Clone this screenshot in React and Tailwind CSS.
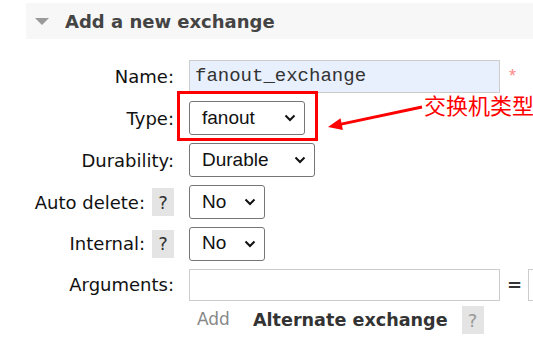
import React from "react";

const Chevron = () => (
  <svg width="12" height="8" viewBox="0 0 12 8">
    <path d="M1.5 1.5 L6 6 L10.5 1.5" fill="none" stroke="#111" strokeWidth="2" />
  </svg>
);

function Select({ value, width }) {
  return (
    <div
      className={`flex h-[34px] items-center justify-between rounded-[3px] border border-[#767676] bg-white pl-[12px] pr-[8px] font-['Liberation_Sans',Arial,sans-serif] text-[19px] text-[#111] ${width}`}
    >
      <span>{value}</span>
      <Chevron />
    </div>
  );
}

function Help({ dim }) {
  return (
    <span
      className={`flex h-[28px] w-[22px] items-center justify-center bg-[#e4e4e4] text-[18px] ${
        dim ? "text-[#999]" : "text-[#333]"
      }`}
    >
      ?
    </span>
  );
}

function Row({ label, help, height, children }) {
  return (
    <div className={`flex items-center ${height}`}>
      <div className="flex w-[174px] shrink-0 items-center justify-end gap-[7px] text-[18px] text-[#111]">
        <span>{label}</span>
        {help && <Help />}
      </div>
      <div className="ml-[15px] flex shrink-0 items-center">{children}</div>
    </div>
  );
}

export default function App() {
  return (
    <div className="relative h-[338px] w-[533px] overflow-hidden bg-white font-['DejaVu_Sans',Verdana,sans-serif]">
      {/* section header */}
      <div className="ml-[26px] mt-[3px] flex h-[36px] items-center bg-[#f7f7f7]">
        <svg className="ml-[9px]" width="14" height="7" viewBox="0 0 14 7">
          <polygon points="0,0 14,0 7,7" fill="#9a9a9a" />
        </svg>
        <span className="ml-[16px] text-[18px] font-bold text-[#444]">Add a new exchange</span>
      </div>

      <div className="mt-[16px] flex flex-col">
        <Row label="Name:" height="h-[42px]">
          <div className="flex h-[33px] w-[311px] items-center border border-[#ccc] bg-[#e8f0fe] pl-[5px] font-['Liberation_Mono','Courier_New',monospace] text-[19px] text-[#333]">
            fanout_exchange
          </div>
          <span className="ml-[9px] font-['Liberation_Sans',Arial,sans-serif] text-[18px] text-[#f88]">*</span>
        </Row>
        <Row label="Type:" height="h-[42px]">
          <Select value="fanout" width="w-[116px]" />
        </Row>
        <Row label="Durability:" height="h-[42px]">
          <Select value="Durable" width="w-[126px]" />
        </Row>
        <Row label="Auto delete:" help height="h-[42px]">
          <Select value="No" width="w-[76px]" />
        </Row>
        <Row label="Internal:" help height="h-[41px]">
          <Select value="No" width="w-[76px]" />
        </Row>
        <Row label="Arguments:" height="h-[41px]">
          <div className="h-[32px] w-[311px] border border-[#ccc] bg-white" />
          <span className="ml-[7px] text-[18px] font-bold text-[#333]">=</span>
          <div className="ml-[6px] h-[32px] w-[120px] shrink-0 border border-[#ccc] bg-white" />
        </Row>
        <div className="ml-[197px] flex h-[30px] items-center">
          <span className="text-[17px] text-[#888]">Add</span>
          <span className="ml-[23px] text-[17.6px] font-bold text-[#333]">Alternate exchange</span>
          <span className="ml-[14px]">
            <Help dim />
          </span>
        </div>
      </div>

      {/* annotation */}
      <div className="pointer-events-none absolute left-[177px] top-[91px] h-[50px] w-[141px] border-[3px] border-[#f00]" />
      <svg className="pointer-events-none absolute left-[320px] top-[95px]" width="110" height="40" viewBox="0 0 110 40">
        <line x1="102" y1="12" x2="20" y2="29.4" stroke="#f00" strokeWidth="3" />
        <polygon points="8,32 22.9,35 20.5,23.2" fill="#f00" />
      </svg>
      <span className="absolute left-[424px] top-[93px] whitespace-nowrap font-['Noto_Sans_CJK_SC',sans-serif] text-[22px] leading-none text-[#f00]">
        交换机类型
      </span>
    </div>
  );
}
